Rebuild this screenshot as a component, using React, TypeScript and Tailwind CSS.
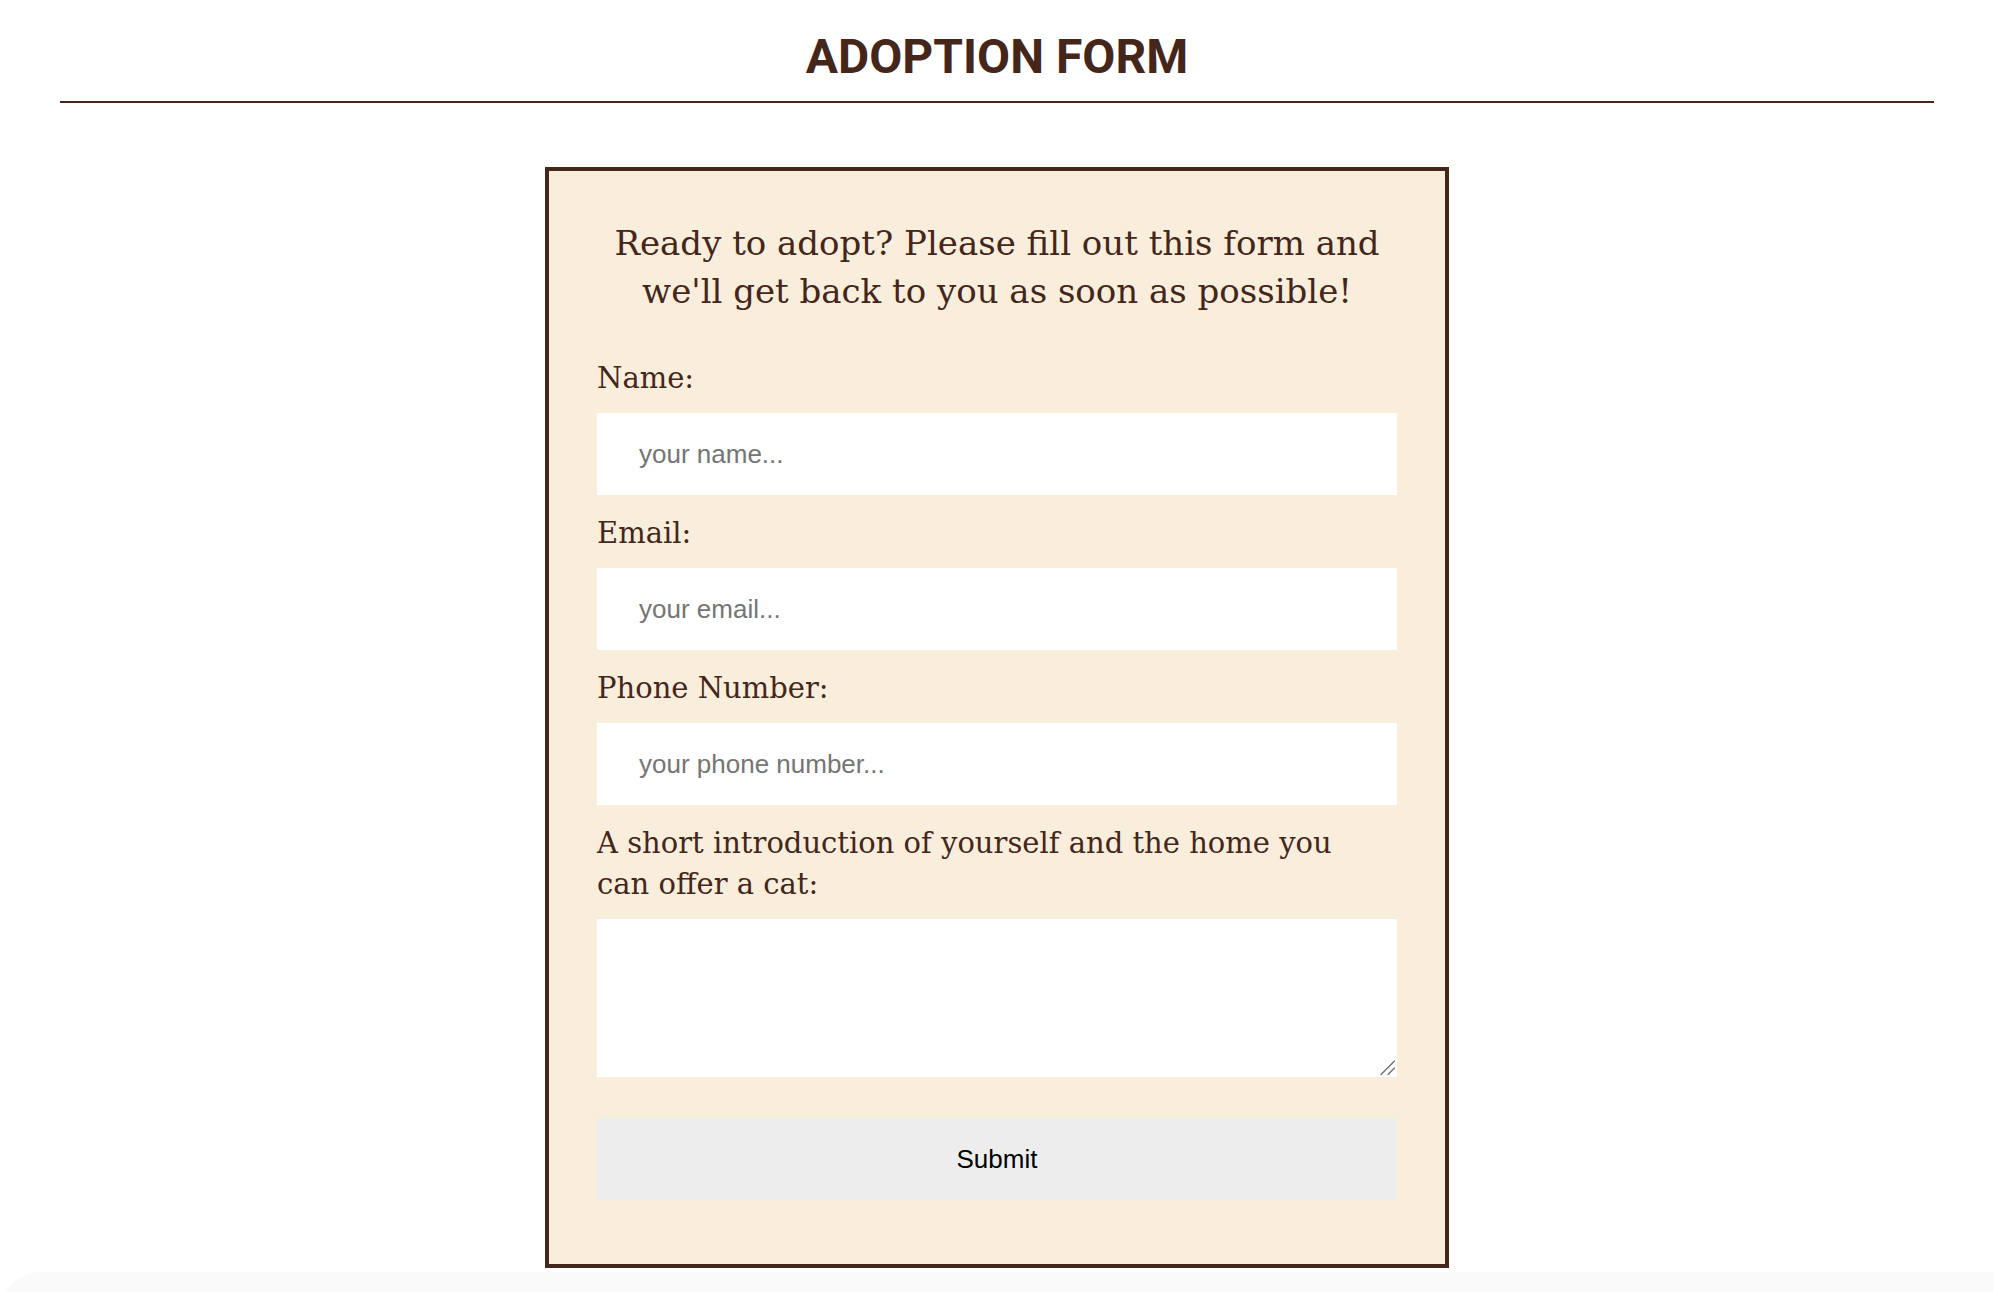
import React from 'react'

const BROWN = 'text-[#45261a]'

const fields = [
  { id: 'name', label: 'Name:', placeholder: 'your name...', type: 'text' },
  { id: 'email', label: 'Email:', placeholder: 'your email...', type: 'email' },
  { id: 'phone', label: 'Phone Number:', placeholder: 'your phone number...', type: 'tel' },
]

export default function App() {
  return (
    <div className="relative min-h-[1292px] w-[1994px] overflow-hidden bg-white">
      {/* Header */}
      <h1
        className={`pt-[29px] text-center text-[48px] font-bold leading-[56px] ${BROWN}`}
        style={{ fontFamily: 'Roboto, "Liberation Sans", sans-serif' }}
      >
        ADOPTION FORM
      </h1>
      <div className="mx-[60px] mt-[16px] h-[2px] bg-[#45261a]" />

      {/* Form card */}
      <div
        className={`relative z-10 mx-auto mt-[64px] w-[904px] border-4 border-[#45261a] bg-[#f9eedc] px-[48px] pb-[64px] pt-[48px] ${BROWN}`}
        style={{ fontFamily: '"DejaVu Serif", "Liberation Serif", serif' }}
      >
        <p className="mb-[43px] text-center text-[34px] leading-[48px]">
          Ready to adopt? Please fill out this form and
          <br />
          we'll get back to you as soon as possible!
        </p>

        <form onSubmit={e => e.preventDefault()}>
          {fields.map(f => (
            <div key={f.id} className="mb-[18px]">
              <label htmlFor={f.id} className="block text-[29px] leading-[41px]">
                {f.label}
              </label>
              <input
                id={f.id}
                type={f.type}
                placeholder={f.placeholder}
                className="mt-[14px] block h-[82px] w-full bg-white pl-[42px] text-[26px] text-black outline-none placeholder:text-[#757575]"
                style={{ fontFamily: '"Liberation Sans", Arial, sans-serif' }}
              />
            </div>
          ))}

          <label htmlFor="intro" className="block text-[29px] leading-[41px]">
            A short introduction of yourself and the home you
            <br />
            can offer a cat:
          </label>
          <div className="relative mt-[14px]">
            <textarea
              id="intro"
              className="block h-[158px] w-full resize-none bg-white p-[10px] text-[26px] text-black outline-none"
              style={{ fontFamily: '"Liberation Sans", Arial, sans-serif' }}
            />
            {/* resize grip */}
            <svg
              className="pointer-events-none absolute bottom-[1px] right-[1px]"
              width="17"
              height="17"
              viewBox="0 0 17 17"
              aria-hidden="true"
            >
              <path d="M2 15.5 L15.5 2" stroke="#6b6b6b" strokeWidth="1.3" strokeLinecap="round" />
              <path d="M9 15.5 L15.5 9" stroke="#6b6b6b" strokeWidth="1.3" strokeLinecap="round" />
            </svg>
          </div>

          <button
            type="submit"
            className="mt-[41px] block h-[82px] w-full bg-[#ededed] text-[26px] text-black"
            style={{ fontFamily: '"Liberation Sans", Arial, sans-serif' }}
          >
            Submit
          </button>
        </form>
      </div>

      {/* faint footer band */}
      <div className="mt-[4px] h-[40px] rounded-tl-[40px] bg-[#fafafa]" />
    </div>
  )
}
